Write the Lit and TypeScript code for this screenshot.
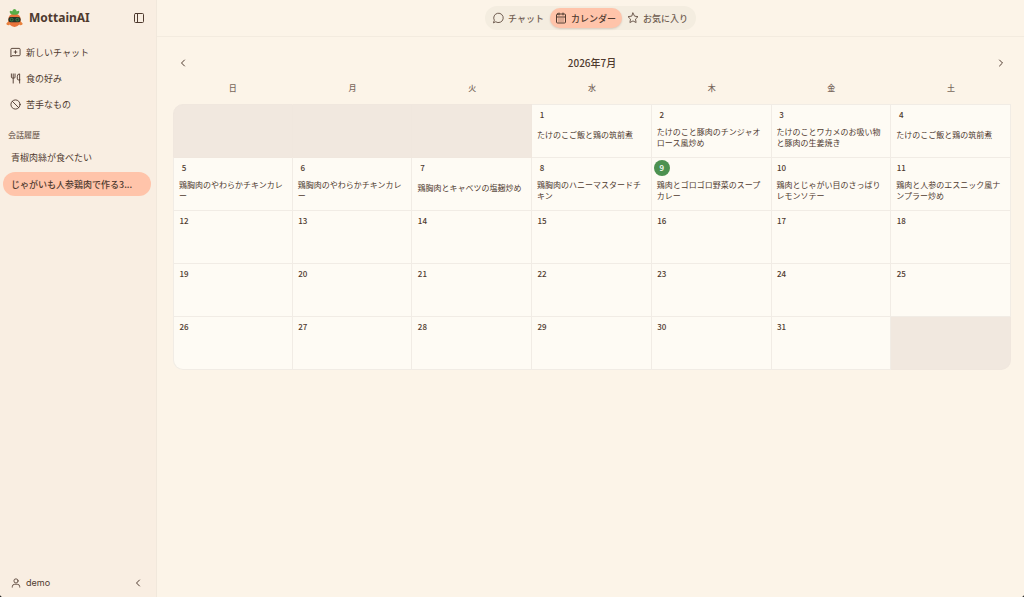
import { LitElement, html, css, svg, nothing } from "lit";
import { customElement, state } from "lit/decorators.js";

const icon = (body: unknown, size = 12) => html`<svg class="icon" width=${size} height=${size} viewBox="0 0 24 24" aria-hidden="true">${body}</svg>`;

const icons = {
  panel: svg`<rect x="3" y="3" width="18" height="18" rx="2"/><path d="M9 3v18"/>`,
  newChat: svg`<path d="M2 21V5a2 2 0 0 1 2-2h16a2 2 0 0 1 2 2v12a2 2 0 0 1-2 2H5z"/><path d="M12 8v6M9 11h6"/>`,
  utensils: svg`<path d="M3 2v7c0 1.100.9 2 2 2h4a2 2 0 0 0 2-2V2M7 2v20M21 15V2a5 5 0 0 0-5 5v6c0 1.100.9 2 2 2h3zm0 0v7"/>`,
  ban: svg`<circle cx="12" cy="12" r="10"/><path d="m4.900 4.900 14.200 14.200"/>`,
  user: svg`<circle cx="12" cy="7" r="5"/><path d="M3 22v-1a6 6 0 0 1 6-6h6a6 6 0 0 1 6 6v1"/>`,
  left: svg`<path d="m15 18-6-6 6-6"/>`,
  right: svg`<path d="m9 18 6-6-6-6"/>`,
  chat: svg`<path d="M3 21l1.700-4.400A9.500 9.500 0 1 1 8 20z"/>`,
  calendar: svg`<rect x="3" y="4" width="18" height="18" rx="2"/><path d="M8 2v4M16 2v4M3 10h18M8 14h.01M12 14h.01M16 14h.01M8 18h.01M12 18h.01M16 18h.01"/>`,
  star: svg`<path d="m12 2 3.100 6.300 6.900 1-5 4.900 1.200 6.900L12 17.800l-6.200 3.300L7 14.200l-5-4.900 6.900-1z"/>`,
};

const logo = html`<svg class="logo" viewBox="0 0 36 40" aria-hidden="true">
  <path d="M7 24 1 30q-1 5 7 4zM29 24l6 6q1 5-7 4z" fill="#e9813d"/>
  <path d="M18 10c10 0 14 7 13 15-1 7-5 12-13 13C10 37 6 32 5 25 4 17 8 10 18 10z" fill="#e8733a"/>
  <path d="M18 12C12 13 7 10 8 4q3-1 5 1 1-4 5-5 4 1 5 5 2-2 5-1c1 6-4 9-10 8z" fill="#58ad48"/>
  <rect x="5" y="17" width="26" height="11" rx="5" fill="#263229"/>
  <circle cx="12" cy="22.500" r="3" fill="none" stroke="#36894a" stroke-width="2"/>
  <circle cx="24" cy="22.500" r="3" fill="none" stroke="#36894a" stroke-width="2"/>
</svg>`;

const meals: Record<number, string> = {
  1: "たけのこご飯と鶏の筑前煮",
  2: "たけのこと豚肉のチンジャオロース風炒め",
  3: "たけのことワカメのお吸い物と豚肉の生姜焼き",
  4: "たけのこご飯と鶏の筑前煮",
  5: "鶏胸肉のやわらかチキンカレー",
  6: "鶏胸肉のやわらかチキンカレー",
  7: "鶏胸肉とキャベツの塩麹炒め",
  8: "鶏胸肉のハニーマスタードチキン",
  9: "鶏肉とゴロゴロ野菜のスープカレー",
  10: "鶏肉とじゃがい目のさっぱりレモンソテー",
  11: "鶏肉と人参のエスニック風ナンプラー炒め",
};

const base = css`
  * { box-sizing: border-box; }
  button { font: inherit; color: inherit; background: none; border: 0; padding: 0; margin: 0; cursor: pointer; }
  .icon { display: block; flex: none; fill: none; stroke: currentColor; stroke-width: 2; stroke-linecap: round; stroke-linejoin: round; }
`;

@customElement("side-bar")
class SideBar extends LitElement {
  static styles = [base, css`
    :host { display: flex; flex-direction: column; background: #f9eee2; border-right: 1px solid #f1e8dc; font-size: 9px; color: #4f3a2f; }
    .head { display: flex; align-items: center; height: 36px; padding: 0 11px 0 6px; }
    .logo { width: 17px; height: 19px; }
    .brand { flex: 1; margin: 0 0 0 6px; font: 700 12px/20px "Noto Sans", "Noto Sans CJK JP", sans-serif; }
    nav { display: flex; flex-direction: column; padding: 3px 8px 0 10px; }
    .link { display: flex; align-items: center; gap: 5px; height: 26px; text-align: left; }
    .label { margin: 0; padding: 12px 8px 0; font-size: 8px; line-height: 12px; font-weight: 500; color: #78675b; }
    ul { list-style: none; margin: 4px 5px 0 3px; padding: 0; display: grid; gap: 3px; }
    .talk { display: block; width: 100%; height: 24px; padding: 0 8px; border-radius: 12px; text-align: left; overflow: hidden; white-space: nowrap; text-overflow: ellipsis; }
    .talk.on { background: #ffc4aa; font-weight: 500; }
    .foot { display: flex; align-items: center; justify-content: space-between; margin-top: auto; padding: 0 12px 8px 11px; }
    .user { display: flex; align-items: center; gap: 5px; font-family: Inter, "Noto Sans CJK JP", sans-serif; line-height: 13px; }
  `];
  render() {
    return html`
      <div class="head">${logo}<h1 class="brand">MottainAI</h1>
        <button aria-label="サイドバー">${icon(icons.panel)}</button></div>
      <nav>
        <button class="link">${icon(icons.newChat, 11)}新しいチャット</button>
        <button class="link">${icon(icons.utensils, 11)}食の好み</button>
        <button class="link">${icon(icons.ban, 11)}苦手なもの</button>
      </nav>
      <h2 class="label">会話履歴</h2>
      <ul>
        <li><button class="talk">青椒肉絲が食べたい</button></li>
        <li><button class="talk on">じゃがいも人参鶏肉で作る3...</button></li>
      </ul>
      <div class="foot"><button class="user">${icon(icons.user, 10)}demo</button>
        <button aria-label="閉じる">${icon(icons.left)}</button></div>`;
  }
}

@customElement("month-calendar")
class MonthCalendar extends LitElement {
  static styles = [base, css`
    :host { display: block; padding: 16px 13px 16px 16px; color: #4f3a2f; }
    .bar { display: flex; align-items: center; justify-content: space-between; height: 20px; padding: 0 4px; }
    .title { margin: 0; font-size: 10px; line-height: 16px; font-weight: 500; }
    table { width: 100%; margin-top: 7px; border-collapse: separate; border-spacing: 0; table-layout: fixed; }
    th { height: 24px; padding: 0 0 8px; font-size: 8px; line-height: 12px; font-weight: 500; color: #78675b; }
    td { padding: 2px 5px 0; vertical-align: top; background: #fefbf4; border: solid #f1ece5; border-width: 0 1px 1px 0; }
    tbody tr:first-child td { border-top-width: 1px; }
    td:first-child { border-left-width: 1px; }
    tbody .blank { background: #f1e8df; border-color: #f0e7de; }
    tbody tr:first-child td:first-child { border-top-left-radius: 10px; }
    tbody tr:last-child td:first-child { border-bottom-left-radius: 10px; }
    tbody tr:last-child td:last-child { border-bottom-right-radius: 10px; }
    .cell { height: 50px; }
    .day { width: 16px; height: 16px; margin-left: -3px; border-radius: 50%; font-size: 8px; line-height: 16px; font-weight: 500; text-align: center; }
    .day.today { background: #4c9150; color: #fff; }
    .meal { display: flex; align-items: center; width: 100%; min-height: 16px; margin-top: 3px; font-size: 8px; line-height: 11px; text-align: left; line-break: anywhere; }
  `];
  render() {
    const weeks = [0, 1, 2, 3, 4].map((w) => [0, 1, 2, 3, 4, 5, 6].map((d) => w * 7 + d - 2));
    return html`
      <div class="bar">
        <button aria-label="前の月">${icon(icons.left)}</button>
        <h2 class="title">2026年7月</h2>
        <button aria-label="次の月">${icon(icons.right)}</button>
      </div>
      <table>
        <thead><tr>${[..."日月火水木金土"].map((d) => html`<th scope="col">${d}</th>`)}</tr></thead>
        <tbody>${weeks.map((week) => html`<tr>${week.map((n) => n < 1 || n > 31
          ? html`<td class="blank"><div class="cell"></div></td>`
          : html`<td><div class="cell"><div class="day ${n === 9 ? "today" : ""}">${n}</div>
              ${meals[n] ? html`<button class="meal">${meals[n]}</button>` : nothing}</div></td>`)}</tr>`)}</tbody>
      </table>`;
  }
}

@customElement("app-root")
class AppRoot extends LitElement {
  @state() tab = 1;
  static styles = [base, css`
    :host { position: relative; display: grid; grid-template-columns: 157px minmax(0, 1fr); min-height: 100vh; background: #fcf4e8; font-family: "Noto Sans CJK JP", sans-serif; font-size: 9px; }
    :host::after { content: ""; position: absolute; inset: auto 0 0; height: 4px; pointer-events: none;
      background: radial-gradient(circle at 100% 0, #0000 4px, #222 5px) left / 4px 4px no-repeat, radial-gradient(circle at 0 0, #0000 4px, #222 5px) right / 4px 4px no-repeat; }
    header { display: flex; align-items: center; justify-content: center; height: 37px; border-bottom: 1px solid #f3ebdf; }
    .tabs { display: flex; height: 24px; padding: 2px; border-radius: 12px; background: #f4ede0; color: #705d51; font-weight: 500; }
    .tab { display: flex; align-items: center; gap: 4px; padding: 0 6px 0 5px; border-radius: 10px; }
    .tab.on { background: #ffc4aa; color: #4f3a2f; box-shadow: 0 1px 2px #5a30202e; }
  `];
  render() {
    const tabs: [unknown, string][] = [[icons.chat, "チャット"], [icons.calendar, "カレンダー"], [icons.star, "お気に入り"]];
    return html`
      <side-bar></side-bar>
      <main>
        <header><div class="tabs">${tabs.map(([glyph, name], i) => html`
          <button class="tab ${this.tab === i ? "on" : ""}" @click=${() => (this.tab = i)}>${icon(glyph)}${name}</button>`)}</div></header>
        <month-calendar></month-calendar>
      </main>`;
  }
}
